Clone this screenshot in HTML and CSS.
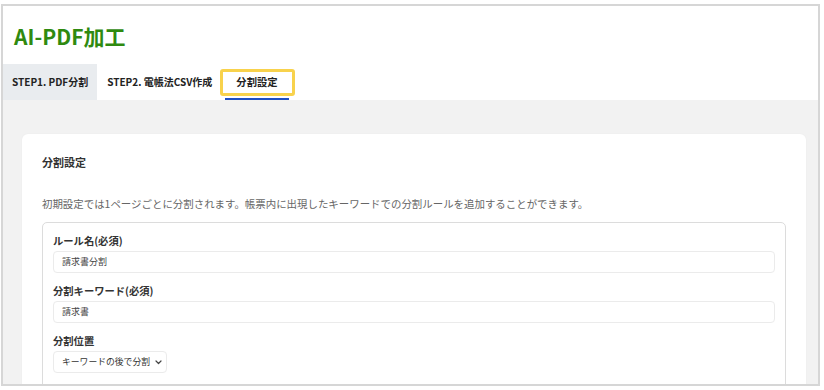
FILE: index.html
```html
<!DOCTYPE html>
<html lang="ja">
<head>
<meta charset="utf-8">
<title>AI-PDF加工</title>
<link rel="stylesheet" href="styles.css">
</head>
<body>
<div class="frame">
  <header class="header">
    <h1 class="title">AI-PDF加工</h1>
  </header>
  <nav class="tabs">
    <div class="tab tab-step1">STEP1. PDF分割</div>
    <div class="tab tab-step2">STEP2. 電帳法CSV作成</div>
    <div class="tab tab-active">分割設定<span class="highlight"></span></div>
  </nav>
  <main class="main">
    <section class="card">
      <h2 class="card-title">分割設定</h2>
      <p class="desc">初期設定では1ページごとに分割されます。帳票内に出現したキーワードでの分割ルールを追加することができます。</p>
      <div class="rule-box">
        <div class="field">
          <label class="label">ルール名(必須)</label>
          <div class="input">請求書分割</div>
        </div>
        <div class="field">
          <label class="label">分割キーワード(必須)</label>
          <div class="input">請求書</div>
        </div>
        <div class="field">
          <label class="label">分割位置</label>
          <div class="select"><span>キーワードの後で分割</span><svg class="chev" width="7" height="5" viewBox="0 0 7 5"><path d="M1 1l2.5 2.5L6 1" fill="none" stroke="#444" stroke-width="1.2" stroke-linecap="round" stroke-linejoin="round"/></svg></div>
        </div>
      </div>
    </section>
  </main>
</div>
</body>
</html>
```

FILE: styles.css
```css
* { box-sizing: border-box; }
html, body { margin: 0; padding: 0; background: #ffffff; }
body { font-family: "Noto Sans CJK JP", "Noto Sans", sans-serif; color: #333; }

.frame {
  margin: 4px 0 0 1px;
  width: 819px;
  height: 382px;
  border: 2px solid #d6d6d6;
  overflow: hidden;
  display: flex;
  flex-direction: column;
  background: #fff;
}

.header { padding: 20px 11px 17px; }
.title {
  margin: 0;
  font-size: 21px;
  line-height: 21px;
  font-weight: 700;
  color: #2f8a10;
}

.tabs { display: flex; height: 36px; flex-shrink: 0; }
.tab {
  display: flex;
  align-items: center;
  padding: 0 10px;
  font-size: 10px;
  line-height: 14px;
  font-weight: 700;
  color: #222;
}
.tab-step1 { background: #e9ecef; padding: 0 9px; }
.tab-step2 { padding: 0 13px 0 10px; }
.tab-active { position: relative; padding: 0 11px; font-size: 10.3px; }
.tab-active::after {
  content: "";
  position: absolute;
  left: 0; right: 0; bottom: 0;
  height: 2px;
  background: #1f4fc2;
}
.highlight {
  position: absolute;
  left: -5px; right: -6px; top: 5px; bottom: 4px;
  border: 3px solid #f8d24c;
  border-radius: 3px;
}

.main {
  flex: 1;
  background: #f2f2f2;
  padding: 34px 12px 0 19px;
}
.card {
  background: #fff;
  border-radius: 6px;
  padding: 20px 20px 20px;
  box-shadow: 0 0 2px rgba(0,0,0,0.04);
}
.card-title {
  margin: 0;
  font-size: 11px;
  line-height: 16px;
  font-weight: 700;
  color: #333;
}
.desc {
  margin: 26px 0 10px;
  font-size: 10.45px;
  line-height: 16px;
  color: #666;
}
.rule-box {
  border: 1px solid #dcdcdc;
  border-radius: 5px;
  padding: 11px 10px 20px;
}
.field + .field { margin-top: 11px; }
.label {
  display: block;
  font-size: 10.3px;
  line-height: 14px;
  font-weight: 700;
  color: #333;
  margin-bottom: 3px;
}
.input {
  height: 22px;
  border: 1px solid #ebebeb;
  border-radius: 4px;
  padding: 0 8px;
  font-size: 9px;
  line-height: 20px;
  color: #444;
}
.select {
  width: 114px;
  height: 22px;
  display: flex;
  align-items: center;
  justify-content: space-between;
  border: 1px solid #ebebeb;
  border-radius: 4px;
  padding: 0 4px 0 8px;
  font-size: 8.8px;
  line-height: 20px;
  color: #333;
}
.chev { display: block; }
```
